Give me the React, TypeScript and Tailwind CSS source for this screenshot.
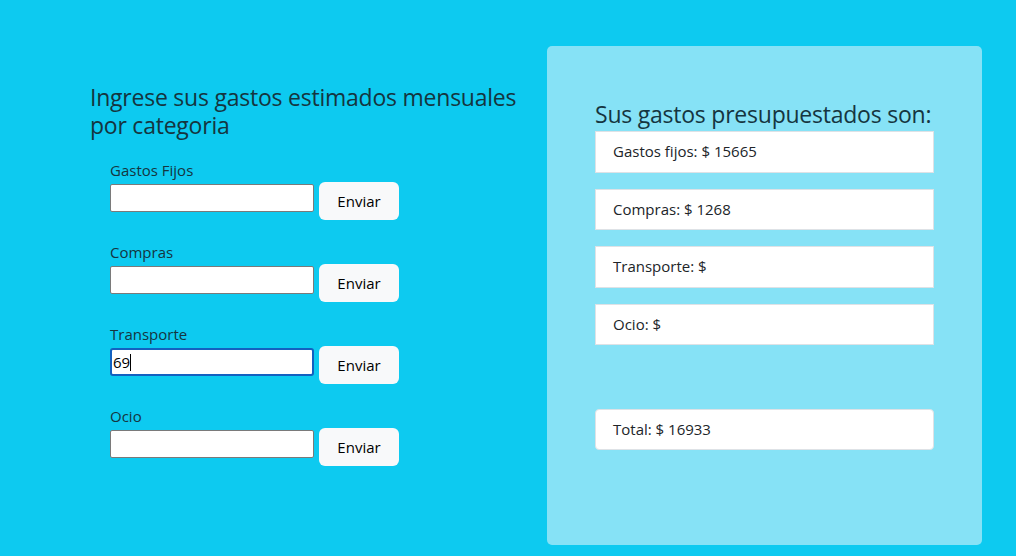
import React from 'react'

const fields = [
  { label: 'Gastos Fijos', value: '' },
  { label: 'Compras', value: '' },
  { label: 'Transporte', value: '69', focused: true },
  { label: 'Ocio', value: '' },
]

const items = ['Gastos fijos: $ 15665', 'Compras: $ 1268', 'Transporte: $', 'Ocio: $']

export default function App() {
  return (
    <div
      className="flex h-[556px] w-[1016px] overflow-hidden bg-[#0dcaf0] text-[#212529]"
      style={{ fontFamily: '"Open Sans", "Noto Sans", sans-serif' }}
    >
      {/* left: form */}
      <div className="w-[547px] shrink-0 pl-[90px] pt-[83px]">
        <h4 className="w-[440px] text-[23px] leading-[28px] tracking-[-0.01em] text-[#15353f]">
          Ingrese sus gastos estimados mensuales por categoria
        </h4>
        <div className="mt-[19px] flex flex-col gap-[20px] pl-[20px]">
          {fields.map((f) => (
            <div key={f.label} className="flex flex-col">
              <label className="text-[15px] leading-[24px] text-[#15353f]">{f.label}</label>
              <div className="flex items-start gap-[5px]">
                <div className="relative mt-[2px]">
                  <input
                    readOnly
                    value={f.value}
                    className={
                      f.focused
                        ? 'h-[28px] w-[204px] rounded-[3px] border-2 border-[#1361c0] bg-white px-[1px] text-[15px] text-black outline-none'
                        : 'h-[28px] w-[204px] rounded-[2px] border border-[#7a7a7a] bg-white px-[2px] text-[15px] text-black outline-none'
                    }
                  />
                  {f.focused && (
                    <span className="absolute left-[20px] top-[6px] h-[17px] w-px bg-black" />
                  )}
                </div>
                <button className="h-[38px] w-[80px] rounded-[6px] bg-[#f8f9fa] text-[15px] text-black">
                  Enviar
                </button>
              </div>
            </div>
          ))}
        </div>
      </div>

      {/* right: summary */}
      <div className="mt-[46px] mb-[11px] w-[435px] rounded-[5px] bg-[#86e2f6] pl-[48px] pt-[52px]">
        <h4 className="text-[23px] leading-[32px] tracking-[-0.01em] text-[#15353f]">
          Sus gastos presupuestados son:
        </h4>
        <div className="mt-[1px] flex w-[339px] flex-col gap-[16px]">
          {items.map((t) => (
            <div
              key={t}
              className="h-[41.5px] border border-[#dee2e6] bg-white px-[17px] text-[15px] leading-[39px]"
            >
              {t}
            </div>
          ))}
        </div>
        <div className="mt-[64px] h-[41px] w-[339px] rounded-[4px] border border-[#dee2e6] bg-white px-[17px] text-[15px] leading-[39px]">
          Total: $ 16933
        </div>
      </div>
    </div>
  )
}
